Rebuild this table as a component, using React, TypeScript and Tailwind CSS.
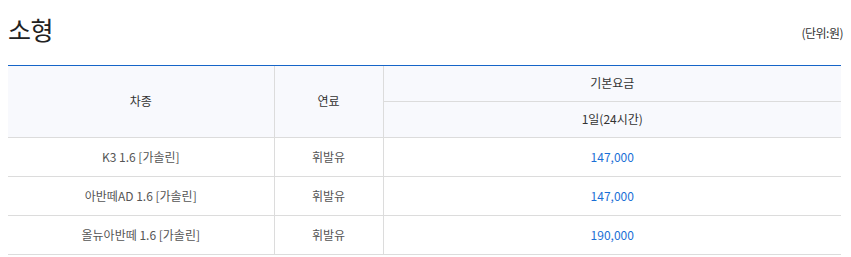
import React from "react";

const rows = [
  { car: "K3 1.6 [가솔린]", fuel: "휘발유", price: "147,000" },
  { car: "아반떼AD 1.6 [가솔린]", fuel: "휘발유", price: "147,000" },
  { car: "올뉴아반떼 1.6 [가솔린]", fuel: "휘발유", price: "190,000" },
];

export default function App() {
  return (
    <div
      className="w-[851px] h-[257px] bg-white px-[8px] pt-[6px]"
      style={{ fontFamily: '"Noto Sans CJK KR", "Noto Sans", sans-serif' }}
    >
      <div className="flex items-end justify-between h-[40px]">
        <h2 className="text-[25px] leading-[34px] text-[#222] font-normal tracking-[-0.5px]">소형</h2>
        <span className="text-[12px] leading-[16px] text-[#333] mb-[5px] tracking-[-0.5px]">(단위:원)</span>
      </div>
      <div className="mt-[19px] w-[833px] h-px bg-[#1565c8]" />
      <table className="w-[833px] border-collapse table-fixed">
        <colgroup>
          <col className="w-[266px]" />
          <col className="w-[109px]" />
          <col className="w-[458px]" />
        </colgroup>
        <thead>
          <tr className="h-[35px]">
            <th
              rowSpan={2}
              className="bg-[#f8f9fd] border-r border-b border-[#dcdcdc] text-[12px] font-normal text-[#333]"
            >
              차종
            </th>
            <th
              rowSpan={2}
              className="bg-[#f8f9fd] border-r border-b border-[#dcdcdc] text-[12px] font-normal text-[#333]"
            >
              연료
            </th>
            <th className="bg-[#f8f9fd] border-b border-[#dcdcdc] text-[12px] font-normal text-[#333]">
              기본요금
            </th>
          </tr>
          <tr className="h-[36px]">
            <th className="bg-[#f8f9fd] border-b border-[#dcdcdc] text-[12px] font-normal text-[#333]">
              1일(24시간)
            </th>
          </tr>
        </thead>
        <tbody>
          {rows.map((r, i) => (
            <tr key={i} className="h-[39px]">
              <td className="border-r border-b border-[#dcdcdc] text-center text-[12px] text-[#555]">{r.car}</td>
              <td className="border-r border-b border-[#dcdcdc] text-center text-[12px] text-[#555]">{r.fuel}</td>
              <td className="border-b border-[#dcdcdc] text-center text-[12px] text-[#1a6fd6]">{r.price}</td>
            </tr>
          ))}
        </tbody>
      </table>
    </div>
  );
}
